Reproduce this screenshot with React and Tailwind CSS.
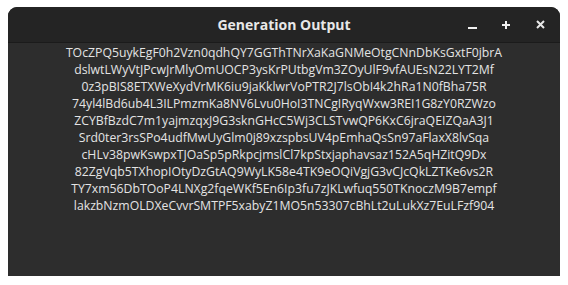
const LINES = [
  'TOcZPQ5uykEgF0h2Vzn0qdhQY7GGThTNrXaKaGNMeOtgCNnDbKsGxtF0jbrA',
  'dslwtLWyVtJPcwJrMlyOmUOCP3ysKrPUtbgVm3ZOyUlF9vfAUEsN22LYT2Mf',
  '0z3pBIS8ETXWeXydVrMK6iu9jaKklwrVoPTR2J7lsObI4k2hRa1N0fBha75R',
  '74yl4lBd6ub4L3ILPmzmKa8NV6Lvu0HoI3TNCgIRyqWxw3REI1G8zY0RZWzo',
  'ZCYBfBzdC7m1yajmzqxJ9G3sknGHcC5Wj3CLSTvwQP6KxC6jraQEIZQaA3J1',
  'Srd0ter3rsSPo4udfMwUyGlm0j89xzspbsUV4pEmhaQsSn97aFlaxX8lvSqa',
  'cHLv38pwKswpxTJOaSp5pRkpcjmslCl7kpStxjaphavsaz152A5qHZitQ9Dx',
  '82ZgVqb5TXhopIOtyDzGtAQ9WyLK58e4TK9eOQiVgjG3vCJcQkLZTKe6vs2R',
  'TY7xm56DbTOoP4LNXg2fqeWKf5En6Ip3fu7zJKLwfuq550TKnoczM9B7empf',
  'lakzbNzmOLDXeCvvrSMTPF5xabyZ1MO5n53307cBhLt2uLukXz7EuLFzf904',
];

export default function App() {
  return (
    <div className="w-[568px] h-[285px] bg-white pt-[7px] px-[8px] font-['Open_Sans',sans-serif]">
      <div className="h-[269px] flex flex-col rounded-t-[9px] overflow-hidden bg-[#2d2d2d]">
        <div className="h-[36px] shrink-0 flex items-center bg-[#242424] border-b border-[#1b1b1b] relative">
          <span className="flex-1 text-center text-[14px] font-bold text-[#e8e8e8]">Generation Output</span>
          <div className="absolute right-[10px] top-0 h-full flex items-center gap-[14px] text-[#f0f0f0]">
            <button className="w-[20px] h-[20px] flex items-center justify-center">
              <span className="block w-[9px] h-[2px] bg-[#f0f0f0] mt-[6px]" />
            </button>
            <button className="w-[20px] h-[20px] flex items-center justify-center">
              <svg width="10" height="10" viewBox="0 0 10 10"><path d="M5 1v8M1 5h8" stroke="#f0f0f0" strokeWidth="2" /></svg>
            </button>
            <button className="w-[20px] h-[20px] flex items-center justify-center">
              <svg width="9" height="9" viewBox="0 0 9 9"><path d="M1 1l7 7M8 1l-7 7" stroke="#e8e8e8" strokeWidth="2" /></svg>
            </button>
          </div>
        </div>
        <div className="flex-1 pt-[1px] text-center text-[12.25px] leading-[17px] text-[#e4e4e4]">
          {LINES.map((l) => (
            <div key={l}>{l}</div>
          ))}
        </div>
      </div>
    </div>
  );
}
